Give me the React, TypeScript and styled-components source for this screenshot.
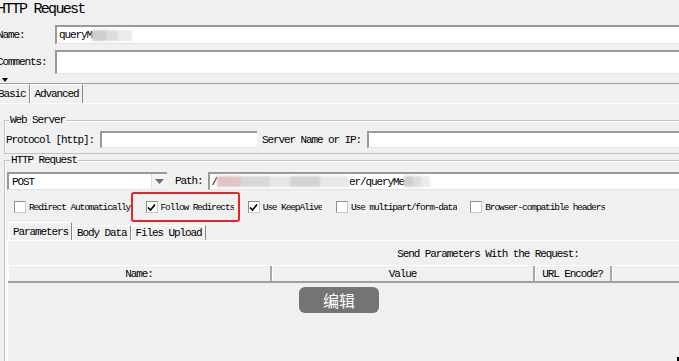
import styled, { createGlobalStyle } from 'styled-components';

const GlobalStyle = createGlobalStyle`
  html, body {
    margin: 0;
    padding: 0;
    background: #f0f0f0;
    overflow: hidden;
  }
`;

const Screen = styled.div`
  position: relative;
  width: 679px;
  height: 361px;
  overflow: hidden;
  background: #f0f0f0;
`;

const Page = styled.div`
  display: flex;
  flex-direction: column;
  width: 1000px;
  margin-left: -3px;
  font-family: 'Liberation Mono', 'Courier New', monospace;
  font-size: 11px;
  letter-spacing: -1.1px;
  color: #000;
`;

const Title = styled.div`
  height: 23px;
  font-size: 15px;
  line-height: 20px;
  letter-spacing: -1.7px;
`;

const FormRow = styled.div<{ $top: number }>`
  display: flex;
  align-items: center;
  margin-top: ${(p) => p.$top}px;
`;

const RowLabel = styled.span<{ $w?: number }>`
  flex: none;
  width: ${(p) => (p.$w ? `${p.$w}px` : 'auto')};
  white-space: nowrap;
`;

const Field = styled.div<{ $h: number; $w?: number }>`
  flex: ${(p) => (p.$w ? 'none' : '1')};
  width: ${(p) => (p.$w ? `${p.$w}px` : 'auto')};
  height: ${(p) => p.$h}px;
  box-sizing: border-box;
  display: flex;
  align-items: center;
  padding-left: 2px;
  background: #fff;
  border-top: 2px solid #999;
  border-left: 2px solid #999;
  border-bottom: 1px solid #e3e3e3;
  white-space: nowrap;
  overflow: hidden;
`;

const Mosaic = styled.span<{ $w: number; $pink?: boolean }>`
  display: inline-block;
  width: ${(p) => p.$w}px;
  height: 11px;
  flex: none;
  filter: blur(1.2px);
  background: ${(p) =>
    p.$pink
      ? 'linear-gradient(90deg, #e2c4c4 0 18%, #d8d8d8 18% 40%, #e6e6e6 40% 55%, #d2d2d2 55% 78%, #e8e8e8 78%)'
      : 'linear-gradient(90deg, #cdcdcd 0 35%, #dcdcdc 35% 65%, #ebebeb 65%)'};
`;

const Splitter = styled.div`
  height: 9px;
  display: flex;
  align-items: flex-end;
  padding-left: 5px;
  border-bottom: 1px solid #a0a0a0;
  svg {
    display: block;
    margin-bottom: 1px;
  }
`;

const TabStrip = styled.div<{ $h: number; $indent: number }>`
  display: flex;
  align-items: flex-end;
  height: ${(p) => p.$h}px;
  margin-left: ${(p) => p.$indent}px;
`;

const Tab = styled.div<{ $h: number }>`
  height: ${(p) => p.$h}px;
  box-sizing: border-box;
  display: flex;
  align-items: center;
  padding: 0 3px 0 4px;
  border-left: 1px solid #fff;
  border-top: 1px solid #fff;
  border-right: 1px solid #8a8a8a;
  white-space: nowrap;
`;

const TabPanel = styled.div`
  border-top: 1px solid #fff;
  padding: 10px 0 0 7px;
`;

const Group = styled.fieldset<{ $pl: number; $pb: number }>`
  margin: 0;
  min-width: 0;
  padding: 0 0 ${(p) => p.$pb}px ${(p) => p.$pl}px;
  border: 1px solid #c2c2c2;
  border-right: none;
  box-shadow: inset 1px 1px 0 #fff;
`;

const Legend = styled.legend`
  margin-left: 3px;
  padding: 0 1px;
  line-height: 12px;
`;

const Combo = styled.div`
  flex: none;
  width: 160px;
  height: 18px;
  box-sizing: border-box;
  display: flex;
  align-items: center;
  background: #fff;
  border-top: 2px solid #999;
  border-left: 2px solid #999;
  border-bottom: 1px solid #e3e3e3;
`;

const ComboText = styled.span`
  flex: 1;
  padding-left: 3px;
`;

const ComboArrow = styled.span`
  width: 15px;
  height: 100%;
  display: flex;
  align-items: center;
  justify-content: center;
  background: #f4f4f4;
  border-left: 1px solid #e0e0e0;
`;

const CheckRow = styled.div`
  display: flex;
  align-items: center;
  height: 12px;
  margin-top: 11px;
  padding-left: 7px;
  gap: 13.5px;
  font-size: 9.5px;
  letter-spacing: -1.1px;
`;

const CheckItem = styled.label`
  display: flex;
  align-items: center;
  gap: 3px;
  white-space: nowrap;
`;

const Box = styled.span`
  flex: none;
  width: 12px;
  height: 12px;
  box-sizing: border-box;
  background: #fff;
  border: 1px solid #8e8f8f;
  border-right-color: #c8c8c8;
  border-bottom-color: #c8c8c8;
  display: flex;
  align-items: center;
  justify-content: center;
`;

const CheckText = styled.span<{ $clip?: number }>`
  display: inline-block;
  overflow: hidden;
  width: ${(p) => (p.$clip ? `${p.$clip}px` : 'auto')};
`;

const Highlight = styled.span`
  display: flex;
  padding: 7px 4px 7px 13px;
  margin: -9px -6px -9px -15px;
  border: 2px solid #e4262a;
  border-radius: 3px;
`;

const SubPanel = styled.div`
  width: 961px;
  box-sizing: border-box;
  border-top: 1px solid #fff;
  border-left: 1px solid #fff;
  display: flex;
  flex-direction: column;
  height: 130px;
`;

const Caption = styled.div`
  margin-top: 7px;
  line-height: 13px;
  text-align: center;
`;

const HeaderRow = styled.div`
  display: flex;
  margin-top: 4px;
  height: 18px;
  box-sizing: border-box;
  border-top: 1px solid #fff;
  border-bottom: 2px solid #a0a0a0;
`;

const HeaderCell = styled.div<{ $w?: number }>`
  flex: ${(p) => (p.$w ? 'none' : '1')};
  width: ${(p) => (p.$w ? `${p.$w}px` : 'auto')};
  box-sizing: border-box;
  display: flex;
  align-items: center;
  justify-content: center;
  border-right: 2px solid #a8a8a8;
  box-shadow: inset 1px 0 0 #fff;
  white-space: nowrap;
`;

const EditButton = styled.button`
  position: absolute;
  left: 299px;
  top: 287px;
  width: 80px;
  height: 26px;
  border: none;
  border-radius: 6px;
  background: #747474;
  color: #fff;
  font-family: 'Noto Sans CJK SC', 'Noto Sans', sans-serif;
  font-size: 16px;
  line-height: 26px;
  padding: 0;
`;

const Grip = styled.span`
  position: absolute;
  right: 0;
  bottom: 0;
  width: 2px;
  height: 4px;
  background: #000;
`;

const Check = () => (
  <svg width="9" height="9" viewBox="0 0 9 9">
    <path d="M1 4.5 L3.5 7 L8 1.5" fill="none" stroke="#000" strokeWidth="1.7" />
  </svg>
);

const CheckBox = ({ label, checked, clip }: { label: string; checked?: boolean; clip?: number }) => (
  <CheckItem>
    <Box>{checked && <Check />}</Box>
    <CheckText $clip={clip}>{label}</CheckText>
  </CheckItem>
);

export default function App() {
  return (
    <Screen>
      <GlobalStyle />
      <Page>
        <Title>HTTP Request</Title>
        <FormRow $top={2}>
          <RowLabel $w={58}>Name:</RowLabel>
          <Field $h={19}>
            queryM
            <Mosaic $w={40} />
          </Field>
        </FormRow>
        <FormRow $top={6}>
          <RowLabel $w={58}>Comments:</RowLabel>
          <Field $h={24} />
        </FormRow>
        <Splitter>
          <svg width="6" height="4" viewBox="0 0 6 4">
            <path d="M0 0 H6 L3 4 Z" fill="#000" />
          </svg>
        </Splitter>
        <TabStrip $h={19} $indent={-4}>
          <Tab $h={19}>Basic</Tab>
          <Tab $h={19}>Advanced</Tab>
        </TabStrip>
        <TabPanel>
          <Group $pl={1} $pb={5}>
            <Legend>Web Server</Legend>
            <FormRow $top={5}>
              <RowLabel>Protocol [http]:</RowLabel>
              <Field $h={17} $w={157} style={{ marginLeft: 6 }} />
              <RowLabel style={{ marginLeft: 5 }}>Server Name or IP:</RowLabel>
              <Field $h={17} style={{ marginLeft: 6 }} />
            </FormRow>
          </Group>
          <Group $pl={2} $pb={0}>
            <Legend>HTTP Request</Legend>
            <FormRow $top={6}>
              <Combo>
                <ComboText>POST</ComboText>
                <ComboArrow>
                  <svg width="9" height="5" viewBox="0 0 9 5">
                    <path d="M0 0 H9 L4.5 5 Z" fill="#6d6d6d" />
                  </svg>
                </ComboArrow>
              </Combo>
              <RowLabel style={{ marginLeft: 8 }}>Path:</RowLabel>
              <Field $h={18} style={{ marginLeft: 5 }}>
                /
                <Mosaic $w={132} $pink />
                er/queryMe
                <Mosaic $w={26} />
              </Field>
            </FormRow>
            <CheckRow>
              <CheckBox label="Redirect Automatically" clip={103} />
              <Highlight>
                <CheckBox label="Follow Redirects" checked />
              </Highlight>
              <CheckBox label="Use KeepAlive" checked />
              <CheckBox label="Use multipart/form-data" />
              <CheckBox label="Browser-compatible headers" />
            </CheckRow>
            <TabStrip $h={18} $indent={1} style={{ marginTop: 9 }}>
              <Tab $h={18}>Parameters</Tab>
              <Tab $h={15}>Body Data</Tab>
              <Tab $h={15}>Files Upload</Tab>
            </TabStrip>
            <SubPanel>
              <Caption>Send Parameters With the Request:</Caption>
              <HeaderRow>
                <HeaderCell $w={264}>Name:</HeaderCell>
                <HeaderCell $w={263}>Value</HeaderCell>
                <HeaderCell $w={77}>URL Encode?</HeaderCell>
                <HeaderCell />
              </HeaderRow>
            </SubPanel>
          </Group>
        </TabPanel>
      </Page>
      <EditButton>编辑</EditButton>
      <Grip />
    </Screen>
  );
}
